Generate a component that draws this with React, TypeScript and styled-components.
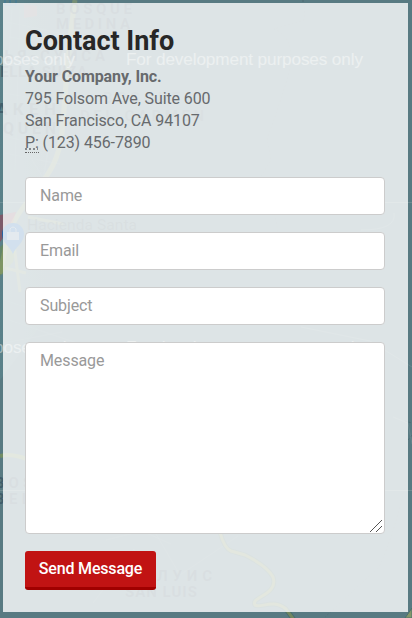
import React from 'react';
import styled, { createGlobalStyle } from 'styled-components';

const GlobalStyle = createGlobalStyle`
  *, *::before, *::after { box-sizing: border-box; }
  body {
    margin: 0;
    overflow: hidden;
    font-family: Roboto, 'Liberation Sans', sans-serif;
    font-size: 16px;
    line-height: 22px;
    color: #676767;
  }
`;

const Section = styled.section`
  position: relative;
  width: 412px;
  height: 618px;
  padding: 3px 4px 6px 3px;
  background: #587a82;
  overflow: hidden;
`;

const MapLayer = styled.svg`
  position: absolute;
  inset: 0;
  font-family: Roboto, sans-serif;
`;

const Panel = styled.div`
  position: relative;
  height: 609px;
  padding: 22px 23px 0 22px;
  background: rgba(255, 255, 255, 0.8);
`;

const Title = styled.h3`
  margin: 0 0 9px;
  font-size: 27px;
  line-height: 32px;
  font-weight: 700;
  letter-spacing: -0.03px;
  color: #272727;
`;

const Address = styled.address`
  margin: 0 0 23px;
  font-style: normal;
  letter-spacing: -0.11px;
  color: #676a6d;
`;

const Line = styled.div`
  height: 22px;
  white-space: nowrap;
`;

const Abbr = styled.abbr`
  display: inline-block;
  height: 21px;
  border-bottom: 1px dotted #676767;
  text-decoration: underline dotted;
`;

const Form = styled.form`
  display: flex;
  flex-direction: column;
  align-items: flex-start;
  gap: 17px;
`;

const Input = styled.input`
  display: block;
  width: 360px;
  height: 38px;
  padding: 6px 14px 7px;
  border: 1px solid #ccc;
  border-radius: 4px;
  outline: 0;
  background: #fff;
  font: 400 16px/22px Roboto, sans-serif;
  letter-spacing: -0.11px;
  color: #555;
  &::placeholder { color: #999; opacity: 1; }
`;

const MessageField = styled.div`
  position: relative;
`;

const TextArea = styled(Input).attrs({ as: 'textarea' })`
  height: 192px;
  padding-top: 7px;
  resize: none;
`;

const ResizeGrip = styled.svg`
  position: absolute;
  right: 3px;
  bottom: 2px;
  pointer-events: none;
`;

const Button = styled.button`
  width: 131px;
  height: 39px;
  padding: 0 0 1px;
  border: 0;
  border-bottom: 3px solid #a00000;
  border-radius: 3px;
  background: #c11313;
  font: 500 16px/22px Roboto, sans-serif;
  letter-spacing: -0.18px;
  color: #fff;
`;

function MapArtwork() {
  return (
    <MapLayer width="412" height="618" viewBox="0 0 412 618" fill="none" aria-hidden="true">
      <defs>
        <linearGradient id="streets" x1="0" x2="1">
          <stop offset="0" stopColor="#5c8991" />
          <stop offset="1" stopColor="#587a82" stopOpacity="0" />
        </linearGradient>
      </defs>
      <path d="M0 0H66L70 150 60 300 0 380Z" fill="url(#streets)" opacity=".5" />
      <path d="M24 4 37 6 37 16 24 18Z" fill="#9a6e72" opacity=".45" />
      <path d="M0 215 16 212 12 226 0 242Z" fill="#7d5a69" />
      <path d="M0 247 20 230 13 262 0 276Z" fill="#688958" opacity=".7" />
      <path d="M75 0C68 45 65 104 62 132S51 172 28 201 8 239 0 274" stroke="#a5ad62" strokeWidth="5" opacity=".4" />
      <path d="M5 268 26 273M13 236 20 292M28 217 63 224" stroke="#a5ad62" strokeWidth="3" opacity=".35" />
      <path d="M5 0V5H16V0M10 0V4" stroke="#3d7897" />
      <g stroke="#739098" strokeWidth=".7" opacity=".35">
        <path d="M7 22 64 34M9 37 57 44M3 93 68 104M4 136 61 150M4 153 60 164M12 8 7 86M20 9 15 170M29 155 57 200M48 150 37 218M4 300 65 320M9 320 83 345M4 343 62 332" />
        <path d="M106 540 142 531 171 544M93 603 134 549 156 596M156 534 180 575 238 536" />
      </g>
      <path d="M0 456Q10 453 27 459" stroke="#728d65" strokeWidth="4" />
      <path d="M220 532Q224 548 231 551L245 555Q267 566 273 577C279 595 250 597 255 605C260 609 273 598 286 609L294 620" stroke="#4b706d" strokeWidth="5" />
      <path d="M220 532Q224 548 231 551L245 555Q267 566 273 577C279 595 250 597 255 605C260 609 273 598 286 609L294 620" stroke="#728761" strokeWidth="3" />
      <path d="M405 618 412 608V618Z" fill="#83976a" stroke="#4b706d" />
      <g stroke="#48636c" strokeWidth=".7" strokeDasharray="2 2">
        <path opacity=".4" d="M305 3 304 20 274 29Q300 39 286 83T267 138L271 160 260 178M274 210 278 232M406 480Q395 533 379 567L325 617" />
        <path d="M303 0V3M405 421 412 423M408 440 412 435" />
      </g>
      <g stroke="#a0b2b7" strokeWidth=".8">
        <path opacity=".4" d="M0 202.5H412M0 490.5H412" />
        <path opacity=".25" d="M301 327 370 341 412 367M361 230Q397 230 394 213M393 417 408 423 412 444" />
      </g>
      <g fill="#344f5e" fontSize="15" fontWeight="700" opacity=".65">
        <text x="56" y="14" textLength="76">BOSQUE</text>
        <text x="56" y="29" textLength="74">MEDINA</text>
        <text x="-10" y="61" textLength="115">ЛЬЯ-СУИСА</text>
        <text x="-10" y="77" textLength="97">BELLA SUIZA</text>
        <text x="103" y="103" textLength="90" opacity=".5">BOSQUES</text>
        <text x="80" y="121" textLength="124" opacity=".7">DEL CARMEN</text>
        <text x="-4" y="115" fontSize="17" textLength="60">АКЕН</text>
        <text x="3" y="134" fontSize="16" textLength="53">QUEN</text>
        <text x="-5" y="488" textLength="78">BOSQUE</text>
        <text x="-5" y="504" textLength="62">BELLA</text>
        <text x="116" y="581" textLength="96">АН-ЛУИС</text>
        <text x="125" y="597" textLength="72">SAN LUIS</text>
      </g>
      <text x="27" y="230" fill="#34505c" fontSize="15.5" textLength="110" opacity=".6">Hacienda Santa</text>
      <path d="M2 234A11 11 0 0 1 24 234C24 243 16 246 13 254 10 246 2 243 2 234Z" fill="#1e65a8" />
      <path d="M7 232H19V240H7Z" fill="#7896ad" />
      <path d="M10 232V229Q13 225 16 229V232" stroke="#7896ad" />
      <g fill="#fff" opacity=".42" fontFamily="'Liberation Sans', sans-serif" fontSize="17.2">
        <text x="126" y="65" textLength="237">For development purposes only</text>
        <text x="-162" y="65" textLength="237">For development purposes only</text>
        <text x="126" y="353" textLength="237">For development purposes only</text>
        <text x="-162" y="353" textLength="237">For development purposes only</text>
      </g>
    </MapLayer>
  );
}

export default function App() {
  return (
    <>
      <GlobalStyle />
      <Section>
        <MapArtwork />
        <Panel>
          <Title>Contact Info</Title>
          <Address>
            <Line><strong>Your Company, Inc.</strong></Line>
            <Line>795 Folsom Ave, Suite 600</Line>
            <Line>San Francisco, CA 94107</Line>
            <Line><Abbr title="Phone">P:</Abbr> (123) 456-7890</Line>
          </Address>
          <Form onSubmit={(event) => event.preventDefault()}>
            <Input placeholder="Name" aria-label="Name" />
            <Input type="email" placeholder="Email" aria-label="Email" />
            <Input placeholder="Subject" aria-label="Subject" />
            <MessageField>
              <TextArea placeholder="Message" aria-label="Message" />
              <ResizeGrip width="12" height="12" viewBox="0 0 12 12" aria-hidden="true">
                <path d="M0 12 12 0M6 12 12 6" stroke="#555" />
              </ResizeGrip>
            </MessageField>
            <Button type="submit">Send Message</Button>
          </Form>
        </Panel>
      </Section>
    </>
  );
}
